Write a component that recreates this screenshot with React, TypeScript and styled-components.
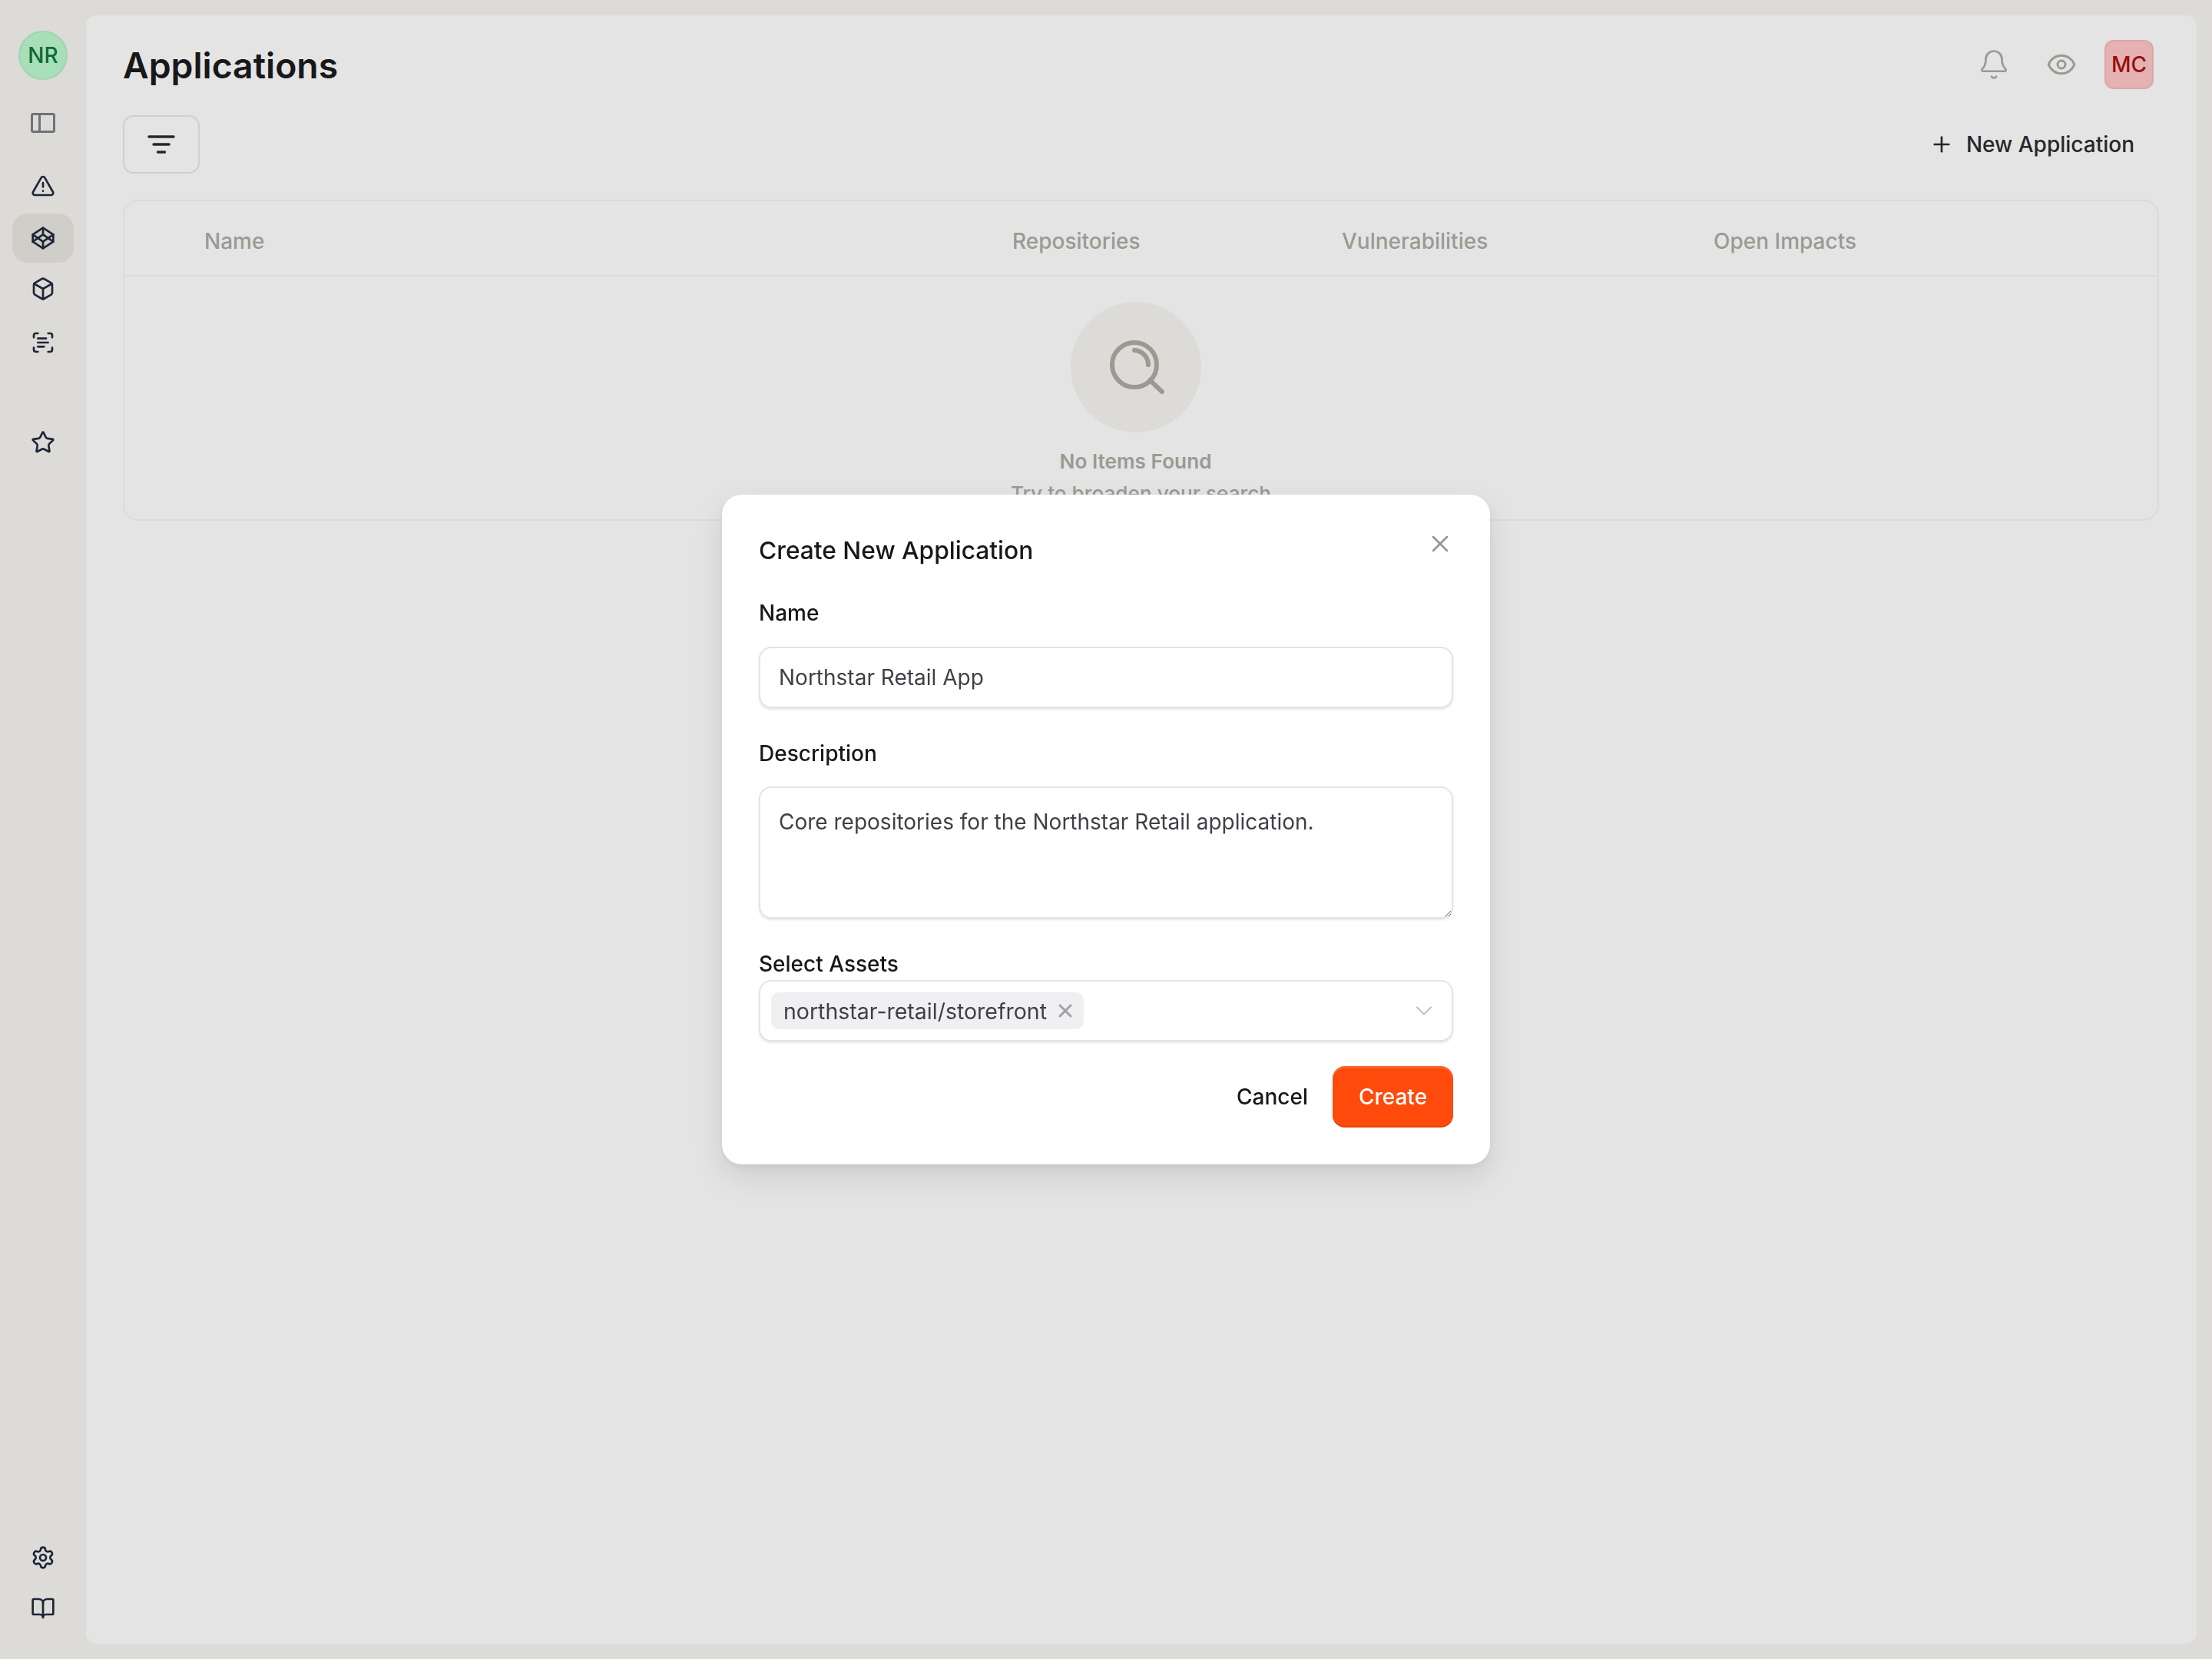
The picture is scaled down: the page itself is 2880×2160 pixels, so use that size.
import styled, { createGlobalStyle } from "styled-components";
import {
  Bell,
  BookOpen,
  Box,
  ChevronDown,
  Codepen,
  Eye,
  Plus,
  ScanText,
  Settings,
  Star,
  TriangleAlert,
  X,
} from "lucide-react";

const GlobalStyle = createGlobalStyle`
  html, body {
    margin: 0;
    height: 100%;
    background: #dcdbd7;
    font-family: Inter, "Liberation Sans", sans-serif;
  }
  * { box-sizing: border-box; }
`;

const Page = styled.div`
  display: flex;
  width: 2880px;
  height: 2160px;
  overflow: hidden;
`;

const Sidebar = styled.nav`
  width: 112px;
  flex: none;
  display: flex;
  flex-direction: column;
  align-items: center;
  padding: 40px 0 34px;
`;

const SidebarAvatar = styled.div`
  width: 64px;
  height: 64px;
  border-radius: 50%;
  background: #a8dfb9;
  border: 2px solid #9fd5b0;
  color: #0f6a33;
  font-size: 28px;
  font-weight: 500;
  display: flex;
  align-items: center;
  justify-content: center;
`;

const NavItem = styled.div<{ $top?: number; $active?: boolean; $muted?: boolean }>`
  width: 80px;
  height: 64px;
  margin-top: ${(p) => p.$top ?? 0}px;
  border-radius: 20px;
  display: flex;
  align-items: center;
  justify-content: center;
  background: ${(p) => (p.$active ? "#cfcec9" : "transparent")};
  color: ${(p) => (p.$muted ? "#71717a" : "#1e2536")};
`;

const Spacer = styled.div`
  flex: 1;
`;

const Main = styled.main`
  flex: 1;
  margin: 20px 20px 20px 0;
  padding: 32px 49px 0 48px;
  background: #e4e4e4;
  border-radius: 14px;
`;

const Header = styled.header`
  display: flex;
  align-items: center;
  justify-content: space-between;
`;

const Title = styled.h1`
  margin: 2px 0 0;
  font-size: 46.3px;
  font-weight: 600;
  line-height: 62px;
  color: #18181a;
`;

const HeaderActions = styled.div`
  display: flex;
  align-items: center;
  margin-right: 7px;
  color: #9a9a92;
`;

const HeaderIcon = styled.div`
  width: 88px;
  display: flex;
  justify-content: center;
`;

const UserAvatar = styled.div`
  width: 64px;
  height: 64px;
  margin-left: 12px;
  border-radius: 12px;
  background: #e5b1b3;
  border: 2px solid #dca6a8;
  color: #9b0b12;
  font-size: 28px;
  font-weight: 500;
  display: flex;
  align-items: center;
  justify-content: center;
`;

const Toolbar = styled.div`
  display: flex;
  align-items: center;
  justify-content: space-between;
  margin-top: 34px;
`;

const FilterButton = styled.button`
  width: 100px;
  height: 76px;
  padding: 0;
  border: 2px solid #cfcfce;
  border-radius: 14px;
  background: transparent;
  color: #27272a;
  display: flex;
  align-items: center;
  justify-content: center;
`;

const NewButton = styled.button`
  height: 76px;
  padding: 0 32px 0 22px;
  border: none;
  background: transparent;
  color: #27272a;
  font-family: inherit;
  font-size: 28px;
  font-weight: 450;
  display: flex;
  align-items: center;
  gap: 16px;
`;

const TableCard = styled.section`
  height: 418px;
  margin-top: 34px;
  border: 2px solid #dbdbda;
  border-radius: 20px;
  overflow: hidden;
`;

const TableHead = styled.div`
  display: grid;
  grid-template-columns: 1052px 429px 484px 1fr;
  height: 98px;
  padding: 8px 0 0 104px;
  align-items: center;
  border-bottom: 2px solid #dbdbda;
  color: #9a9a92;
  font-size: 28px;
  font-weight: 500;
`;

const EmptyState = styled.div`
  display: flex;
  flex-direction: column;
  align-items: center;
  padding-top: 33px;
  color: #9a9a92;
  font-size: 26.2px;
  line-height: 42px;
`;

const EmptyCircle = styled.div`
  width: 170px;
  height: 170px;
  margin-right: 13px;
  border-radius: 50%;
  background: #dcdbd7;
  display: flex;
  align-items: center;
  justify-content: center;
`;

const EmptyTitle = styled.div`
  margin: 17px 14px 0 0;
  font-weight: 600;
`;

const EmptyHint = styled.div`
  font-weight: 500;
`;

const Overlay = styled.div`
  position: fixed;
  inset: 0;
  display: flex;
  align-items: center;
  justify-content: center;
`;

const Modal = styled.div`
  position: relative;
  width: 1000px;
  padding: 51px 48px 48px;
  background: #fff;
  border-radius: 26px;
  box-shadow: 0 16px 40px rgba(0, 0, 0, 0.1), 0 4px 10px rgba(0, 0, 0, 0.06);
`;

const ModalTitle = styled.h2`
  margin: 0 0 41px;
  font-size: 31.7px;
  font-weight: 500;
  line-height: 44px;
  color: #18181b;
`;

const CloseButton = styled.button`
  position: absolute;
  top: 46px;
  right: 47px;
  padding: 0;
  border: none;
  background: none;
  color: #93939a;
  display: flex;
`;

const Label = styled.label<{ $gap: number }>`
  display: block;
  margin-bottom: ${(p) => p.$gap}px;
  font-size: 28px;
  font-weight: 500;
  line-height: 36px;
  color: #18181b;
`;

const Field = styled.div`
  margin-bottom: 41px;
`;

const fieldFrame = `
  width: 100%;
  border: 2px solid #e4e4e7;
  border-radius: 16px;
  background: #fff;
  box-shadow: 0 2px 3px rgba(0, 0, 0, 0.1);
  color: #3f3f46;
  font-family: inherit;
  font-size: 28px;
  outline: none;
`;

const TextInput = styled.input`
  ${fieldFrame}
  display: block;
  height: 80px;
  padding: 0 24px;
`;

const TextArea = styled.textarea`
  ${fieldFrame}
  display: block;
  height: 172px;
  padding: 24px;
  line-height: 40px;
  resize: vertical;
`;

const SelectBox = styled.div`
  ${fieldFrame}
  height: 80px;
  padding: 0 18px 0 14px;
  display: flex;
  align-items: center;
  justify-content: space-between;
`;

const Tag = styled.div`
  height: 48px;
  padding: 0 10px 0 16px;
  border-radius: 10px;
  background: #f0f0f2;
  display: flex;
  align-items: center;
  color: #3f3f46;
`;

const TagText = styled.span`
  margin-right: 10px;
  font-size: 28.5px;
`;

const GrayIcon = styled.span<{ $light?: boolean }>`
  color: ${(p) => (p.$light ? "#bdbdc4" : "#a1a1aa")};
  display: flex;
`;

const Footer = styled.div`
  display: flex;
  justify-content: flex-end;
  align-items: center;
  gap: 32px;
  margin-top: -9px;
`;

const CancelButton = styled.button`
  padding: 0;
  border: none;
  background: none;
  color: #18181b;
  font-family: inherit;
  font-size: 28px;
  font-weight: 500;
`;

const CreateButton = styled.button`
  width: 157px;
  height: 80px;
  padding: 0;
  border: none;
  border-radius: 16px;
  background: #fe4a0b;
  box-shadow: inset 0 3px 0 rgba(255, 255, 255, 0.14), inset 0 -2px 0 rgba(0, 0, 0, 0.1);
  color: #fff;
  font-family: inherit;
  font-size: 28px;
  font-weight: 500;
`;

const PanelIcon = () => (
  <svg width="36" height="32" viewBox="0 0 36 32" fill="none" stroke="currentColor" strokeWidth="3">
    <rect x="3.5" y="4.5" width="29" height="23" rx="1.5" />
    <path d="M13.5 4.5v23" />
  </svg>
);

const FilterIcon = () => (
  <svg width="40" height="28" viewBox="0 0 40 28" fill="none" stroke="currentColor" strokeWidth="3.4" strokeLinecap="round">
    <path d="M4 4h32M10 14h20M15.5 24h9" />
  </svg>
);

const EmptySearchIcon = () => (
  <svg width="76" height="76" viewBox="0 0 76 76" fill="none" stroke="#9a9a92" strokeWidth="6" strokeLinecap="round">
    <circle cx="36" cy="35" r="29" />
    <path d="M36 16a19 19 0 0 1 18 19" />
    <path d="M56 55l16 15" />
  </svg>
);

const App = () => (
  <Page>
    <GlobalStyle />
    <Sidebar>
      <SidebarAvatar>NR</SidebarAvatar>
      <NavItem $top={24} $muted>
        <PanelIcon />
      </NavItem>
      <NavItem $top={18}>
        <TriangleAlert size={32} />
      </NavItem>
      <NavItem $top={4} $active>
        <Codepen size={32} />
      </NavItem>
      <NavItem $top={2}>
        <Box size={32} />
      </NavItem>
      <NavItem $top={6}>
        <ScanText size={32} />
      </NavItem>
      <NavItem $top={66}>
        <Star size={32} />
      </NavItem>
      <Spacer />
      <NavItem>
        <Settings size={32} />
      </NavItem>
      <NavItem $top={2}>
        <BookOpen size={32} />
      </NavItem>
    </Sidebar>
    <Main>
      <Header>
        <Title>Applications</Title>
        <HeaderActions>
          <HeaderIcon>
            <Bell size={42} strokeWidth={1.55} />
          </HeaderIcon>
          <HeaderIcon>
            <Eye size={40} strokeWidth={1.8} />
          </HeaderIcon>
          <UserAvatar>MC</UserAvatar>
        </HeaderActions>
      </Header>
      <Toolbar>
        <FilterButton>
          <FilterIcon />
        </FilterButton>
        <NewButton>
          <Plus size={32} />
          New Application
        </NewButton>
      </Toolbar>
      <TableCard>
        <TableHead>
          <span>Name</span>
          <span>Repositories</span>
          <span>Vulnerabilities</span>
          <span>Open Impacts</span>
        </TableHead>
        <EmptyState>
          <EmptyCircle>
            <EmptySearchIcon />
          </EmptyCircle>
          <EmptyTitle>No Items Found</EmptyTitle>
          <EmptyHint>Try to broaden your search</EmptyHint>
        </EmptyState>
      </TableCard>
    </Main>
    <Overlay>
      <Modal>
        <CloseButton>
          <X size={36} strokeWidth={1.7} />
        </CloseButton>
        <ModalTitle>Create New Application</ModalTitle>
        <Field>
          <Label $gap={26}>Name</Label>
          <TextInput defaultValue="Northstar Retail App" />
        </Field>
        <Field>
          <Label $gap={25}>Description</Label>
          <TextArea defaultValue="Core repositories for the Northstar Retail application." />
        </Field>
        <Field>
          <Label $gap={3}>Select Assets</Label>
          <SelectBox>
            <Tag>
              <TagText>northstar-retail/storefront</TagText>
              <GrayIcon>
                <X size={28} strokeWidth={2.6} />
              </GrayIcon>
            </Tag>
            <GrayIcon $light>
              <ChevronDown size={36} strokeWidth={1.3} />
            </GrayIcon>
          </SelectBox>
        </Field>
        <Footer>
          <CancelButton>Cancel</CancelButton>
          <CreateButton>Create</CreateButton>
        </Footer>
      </Modal>
    </Overlay>
  </Page>
);

export default App;
